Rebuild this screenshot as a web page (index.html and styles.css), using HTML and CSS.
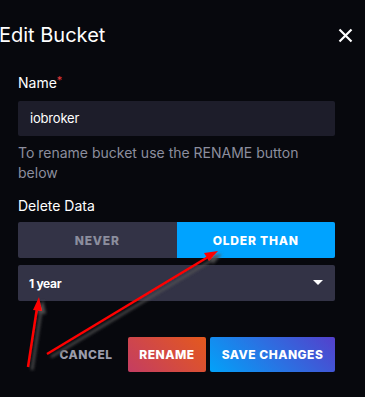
FILE: index.html
```html
<!DOCTYPE html>
<html lang="en">
<head>
  <meta charset="UTF-8">
  <title>Edit Bucket</title>
  <link rel="stylesheet" href="styles.css">
</head>
<body>
  <div class="overlay">
    <div class="modal-header">
      <h2>Edit Bucket</h2>
      <button class="close-btn" aria-label="Close">
        <svg width="15" height="15" viewBox="0 0 15 15"><path d="M1.5 1.5 L13.5 13.5 M13.5 1.5 L1.5 13.5" stroke="#fff" stroke-width="2.2" fill="none"/></svg>
      </button>
    </div>

    <div class="modal-body">
      <label class="field-label">Name<span class="required">*</span></label>
      <div class="input">iobroker</div>
      <p class="help-text">To rename bucket use the RENAME button below</p>

      <label class="field-label delete-label">Delete Data</label>
      <div class="toggle">
        <div class="toggle-btn">NEVER</div>
        <div class="toggle-btn active">OLDER THAN</div>
      </div>
      <div class="select">
        <span>1 year</span>
        <svg width="10" height="6" viewBox="0 0 10 6"><path d="M0 0 L10 0 L5 5 Z" fill="#fff"/></svg>
      </div>

      <div class="modal-footer">
        <button class="btn btn-cancel">CANCEL</button>
        <button class="btn btn-rename">RENAME</button>
        <button class="btn btn-save">SAVE CHANGES</button>
      </div>
    </div>

    <!-- annotation arrows drawn over the dialog -->
    <svg class="arrows" width="365" height="397" viewBox="0 0 365 397">
      <defs>
        <filter id="shadow" x="-20%" y="-20%" width="140%" height="140%">
          <feDropShadow dx="4" dy="3" stdDeviation="1.5" flood-color="#555" flood-opacity="0.9"/>
        </filter>
      </defs>
      <g filter="url(#shadow)">
        <line x1="28" y1="367" x2="37" y2="308" stroke="#f00" stroke-width="2.5"/>
        <polygon points="39,297 33,310 42,311" fill="#f00"/>
        <line x1="47" y1="354" x2="208" y2="257" stroke="#f00" stroke-width="2.5"/>
        <polygon points="218,251 204,253 209,261" fill="#f00"/>
      </g>
    </svg>
  </div>
</body>
</html>
```

FILE: styles.css
```css
body, html {
  margin: 0;
  padding: 0;
  background: #07080d;
  font-family: 'Inter', 'Noto Sans', sans-serif;
  color: #fff;
}

.overlay {
  position: relative;
  width: 365px;
  height: 397px;
  overflow: hidden;
}

.modal-header {
  display: flex;
  justify-content: space-between;
  align-items: center;
  padding: 21px 12px 0 0;
  height: 28px;
}

.modal-header h2 {
  margin: 0 0 0 -1px;
  font-size: 20px;
  font-weight: 400;
  letter-spacing: 0;
}

.close-btn {
  background: none;
  border: none;
  padding: 0;
  display: flex;
}

.modal-body {
  padding: 0 30px 0 18px;
}

.field-label {
  display: block;
  font-size: 14px;
  margin-top: 24px;
  height: 20px;
  line-height: 20px;
}

.required {
  color: #e5383b;
  font-size: 11px;
  vertical-align: top;
  position: relative;
  top: -3px;
}

.input {
  margin-top: 8px;
  height: 35px;
  line-height: 35px;
  background: #1d1d2a;
  border-radius: 2px;
  padding: 0 12px;
  font-size: 13px;
  letter-spacing: -0.2px;
}

.help-text {
  margin: 7px 0 0;
  font-size: 14px;
  line-height: 20px;
  color: #8c8e9e;
}

.delete-label {
  margin-top: 13px;
}

.toggle {
  display: flex;
  margin-top: 6px;
  height: 36px;
  border-radius: 2px;
  overflow: hidden;
  background: #333346;
}

.toggle-btn {
  flex: 1;
  display: flex;
  align-items: center;
  justify-content: center;
  font-size: 12px;
  font-weight: 800;
  letter-spacing: 0.8px;
  color: #8c8e9e;
}

.toggle-btn.active {
  background: #00a3ff;
  color: #fff;
}

.select {
  display: flex;
  justify-content: space-between;
  align-items: center;
  margin-top: 7px;
  height: 36px;
  background: #333346;
  border-radius: 2px;
  padding: 0 12px 0 11px;
  font-size: 12px;
  font-weight: 700;
  letter-spacing: -0.3px;
}

.modal-footer {
  display: flex;
  justify-content: flex-end;
  gap: 4px;
  margin-top: 36px;
}

.btn {
  height: 35px;
  border: none;
  border-radius: 2px;
  font-family: 'Inter', 'Noto Sans', sans-serif;
  font-size: 12px;
  font-weight: 800;
  letter-spacing: 0.5px;
  color: #fff;
  padding: 0;
}

.btn-cancel {
  background: none;
  color: #9a9cab;
  width: 64px;
  margin-right: 6px;
}

.btn-rename {
  width: 78px;
  background: linear-gradient(45deg, #c43d62, #e4591d);
}

.btn-save {
  width: 125px;
  background: linear-gradient(45deg, #02a2f9, #5440cb);
}

.arrows {
  position: absolute;
  left: 0;
  top: 0;
  pointer-events: none;
}
```
